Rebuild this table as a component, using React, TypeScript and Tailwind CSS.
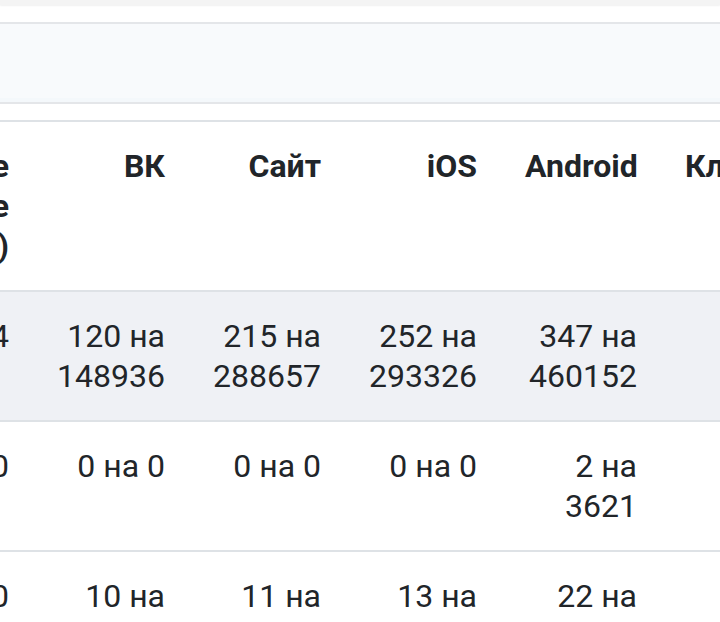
import React from 'react';

type Row = { total: string; vk: string; site: string; ios: string; android: string; clients: string };

const rows: Row[] = [
  { total: '934', vk: '120 на 148936', site: '215 на 288657', ios: '252 на 293326', android: '347 на 460152', clients: '' },
  { total: '0', vk: '0 на 0', site: '0 на 0', ios: '0 на 0', android: '2 на 3621', clients: '' },
  { total: '60', vk: '10 на 14012', site: '11 на 15877', ios: '13 на 16109', android: '22 на 15232', clients: '' },
];

export default function App() {
  return (
    <div className="w-[720px] h-[622px] overflow-hidden bg-white font-['Roboto',sans-serif] text-[#212529]">
      {/* top bar */}
      <div className="h-[5px] bg-[#f4f4f4] shadow-[0_1px_2px_rgba(0,0,0,0.06)]" />
      <div className="h-[17px]" />

      {/* filter band */}
      <div className="border-y-2 border-[#e4e6e9] bg-[#f8fafc]">
        <div className="h-[74px]" />
        <div className="h-[4px] bg-[#f4f8fb]" />
      </div>
      <div className="h-[16px]" />

      {/* table, scrolled sideways */}
      <div className="overflow-hidden border-t-2 border-[#dee2e6]">
        <table className="table-fixed border-collapse -ml-[167px] w-[1048px] text-[32px] leading-10">
          <colgroup>
            <col className="w-[200px]" />
            <col className="w-[156px]" />
            <col className="w-[156px]" />
            <col className="w-[156px]" />
            <col className="w-[160px]" />
            <col className="w-[220px]" />
          </colgroup>
          <thead>
            <tr className="border-b-2 border-[#dee2e6]">
              <th className="p-6 text-right align-top font-bold">
                Общие
                <br />
                данные
                <br />
                (итого)
              </th>
              <th className="p-6 text-right align-top font-bold">ВК</th>
              <th className="p-6 text-right align-top font-bold">Сайт</th>
              <th className="p-6 text-right align-top font-bold">iOS</th>
              <th className="p-6 text-right align-top font-bold">Android</th>
              <th className="p-6 text-left align-top font-bold whitespace-nowrap">Клиенты</th>
            </tr>
          </thead>
          <tbody>
            {rows.map((r, i) => (
              <tr key={i} className={`border-b-2 border-[#dee2e6] ${i === 0 ? 'bg-[#eff1f5]' : 'bg-white'}`}>
                <td className="p-6 text-right align-top">{r.total}</td>
                <td className="p-6 text-right align-top">{r.vk}</td>
                <td className="p-6 text-right align-top">{r.site}</td>
                <td className="p-6 text-right align-top">{r.ios}</td>
                <td className="p-6 text-right align-top">{r.android}</td>
                <td className="p-6 text-right align-top">{r.clients}</td>
              </tr>
            ))}
          </tbody>
        </table>
      </div>
    </div>
  );
}
